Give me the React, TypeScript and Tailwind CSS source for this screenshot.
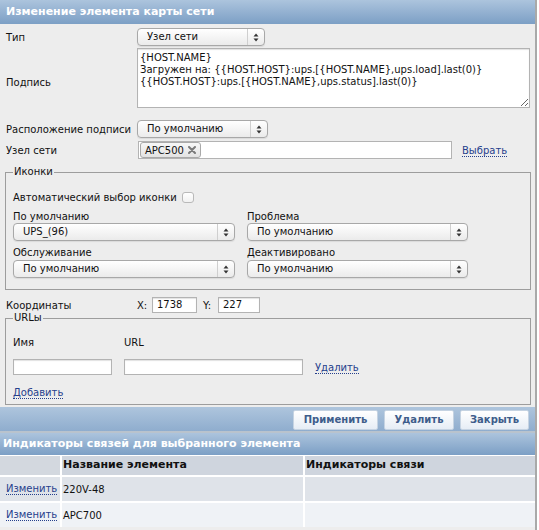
import React from 'react';

// Mac-style select stand-in
const Select = ({ value, className }: { value: string; className: string }) => (
    <div className={`flex items-center h-[18px] rounded-[4px] border border-[#a8a8a8] bg-gradient-to-b from-white to-[#ebebeb] shadow-[0_1px_1px_rgba(0,0,0,0.08)] ${className}`}>
        <span className="flex-1 pl-[9px] text-[10px] leading-none text-[#111]">{value}</span>
        <span className="w-[17px] h-full border-l border-[#cfcfcf] flex items-center justify-center">
            <svg width="6" height="9" viewBox="0 0 6 9">
                <path d="M3 0.5 L5.5 3.5 L0.5 3.5 Z" fill="#333" />
                <path d="M3 8.5 L5.5 5.5 L0.5 5.5 Z" fill="#333" />
            </svg>
        </span>
    </div>
);

const Link = ({ children }: { children: React.ReactNode }) => (
    <span className="text-[10px] leading-[11px] text-[#26408c] border-b border-dotted border-[#26408c] cursor-pointer">{children}</span>
);

const TextInput = ({ value, className }: { value?: string; className: string }) => (
    <div className={`h-[16px] bg-white border border-[#b3b3b3] shadow-[inset_0_1px_1px_rgba(0,0,0,0.12)] pl-[4px] text-[10px] leading-[14px] text-[#111] ${className}`}>
        {value}
    </div>
);

const Header = ({ title, pad }: { title: string; pad: string }) => (
    <div className={`bg-gradient-to-b from-[#acc4dd] to-[#7c9fc5] text-white font-bold text-[11px] flex items-center ${pad}`}>
        {title}
    </div>
);

const App: React.FC = () => {
    const links = [
        { name: '220V-48', bg: 'bg-[#dfe3e9]' },
        { name: 'APC700', bg: 'bg-[#eff2f6]' },
    ];

    return (
        <div className="w-[539px] h-[530px] overflow-hidden bg-white font-['DejaVu_Sans',sans-serif] text-[#111]">
            <div className="w-[537px] h-full bg-[#ededed] border-r-2 border-[#a9a9a9]">
                <Header title="Изменение элемента карты сети" pad="h-[24px] pl-[6px]" />

                {/* Form */}
                <div className="pl-[6px] text-[10px]">
                    <div className="flex items-center mt-[4px]">
                        <span className="w-[131px]">Тип</span>
                        <Select value="Узел сети" className="w-[128px]" />
                    </div>

                    <div className="flex items-center mt-[2px]">
                        <span className="w-[131px] pt-[8px]">Подпись</span>
                        <textarea
                            className="w-[393px] h-[60px] bg-white border border-[#b3b3b3] shadow-[inset_0_1px_1px_rgba(0,0,0,0.12)] px-[2px] pt-[3px] text-[10px] leading-[12px] font-['DejaVu_Sans',sans-serif] text-[#111] outline-none"
                            defaultValue={'{HOST.NAME}\nЗагружен на: {{HOST.HOST}:ups.[{HOST.NAME},ups.load].last(0)}\n{{HOST.HOST}:ups.[{HOST.NAME},ups.status].last(0)}'}
                        />
                    </div>

                    <div className="flex items-center mt-[12px]">
                        <span className="w-[131px]">Расположение подписи</span>
                        <Select value="По умолчанию" className="w-[131px]" />
                    </div>

                    <div className="flex items-center mt-[3px]">
                        <span className="w-[132px]">Узел сети</span>
                        <div className="w-[314px] h-[18px] bg-white border border-[#b3b3b3] flex items-center pl-[1px]">
                            <span className="h-[16px] flex items-center gap-[4px] px-[4px] rounded-[3px] border border-[#a9a9a9] bg-gradient-to-b from-[#f7f7f7] to-[#e3e3e3] text-[10px]">
                                APC500
                                <svg width="8" height="8" viewBox="0 0 8 8">
                                    <path d="M1 1 L7 7 M7 1 L1 7" stroke="#7a7a7a" strokeWidth="2" strokeLinecap="round" />
                                </svg>
                            </span>
                        </div>
                        <span className="ml-[10px]"><Link>Выбрать</Link></span>
                    </div>
                </div>

                {/* Icons fieldset */}
                <fieldset className="ml-[5px] mt-[7px] w-[526px] border border-[#9d9d9d] px-[7px] pb-[11px] text-[10px]">
                    <legend className="px-[1px] leading-[12px]">Иконки</legend>
                    <div className="flex items-center mt-[13px] h-[12px]">
                        <span>Автоматический выбор иконки</span>
                        <span className="ml-[5px] w-[12px] h-[11px] rounded-[3px] border border-[#b9b9b9] bg-gradient-to-b from-white to-[#f1f1f1]"></span>
                    </div>
                    <div className="grid grid-cols-[222px_221px] gap-x-[12px] mt-[8px]">
                        <div>
                            <div className="leading-[12px]">По умолчанию</div>
                            <Select value="UPS_(96)" className="w-[222px]" />
                        </div>
                        <div>
                            <div className="leading-[12px]">Проблема</div>
                            <Select value="По умолчанию" className="w-[221px]" />
                        </div>
                        <div className="mt-[6px]">
                            <div className="leading-[12px] mb-[1px]">Обслуживание</div>
                            <Select value="По умолчанию" className="w-[222px]" />
                        </div>
                        <div className="mt-[6px]">
                            <div className="leading-[12px] mb-[1px]">Деактивировано</div>
                            <Select value="По умолчанию" className="w-[221px]" />
                        </div>
                    </div>
                </fieldset>

                {/* Coordinates */}
                <div className="flex items-center pl-[6px] mt-[7px] h-[16px] text-[10px]">
                    <span className="w-[131px]">Координаты</span>
                    <span className="w-[15px]">X:</span>
                    <TextInput value="1738" className="w-[45px]" />
                    <span className="ml-[6px] w-[15px]">Y:</span>
                    <TextInput value="227" className="w-[42px]" />
                </div>

                {/* URLs fieldset */}
                <fieldset className="ml-[5px] -mt-[1px] w-[526px] border border-[#9d9d9d] px-[7px] pb-[7px] text-[10px]">
                    <legend className="px-[1px] leading-[12px]">URLы</legend>
                    <div className="flex mt-[13px] leading-[12px]">
                        <span className="w-[111px]">Имя</span>
                        <span>URL</span>
                    </div>
                    <div className="flex items-center mt-[10px]">
                        <TextInput className="w-[99px]" />
                        <TextInput className="w-[179px] ml-[12px]" />
                        <span className="ml-[12px]"><Link>Удалить</Link></span>
                    </div>
                    <div className="mt-[10px] h-[12px]">
                        <Link>Добавить</Link>
                    </div>
                </fieldset>

                {/* Button bar */}
                <div className="mt-[2px] h-[26px] bg-gradient-to-b from-[#aec5dd] to-[#8fadce] flex items-center justify-end gap-[6px] pr-[6px] pt-[1px] border-b-2 border-[#b9c3cd]">
                    {['Применить', 'Удалить', 'Закрыть'].map((b, i) => (
                        <button
                            key={b}
                            className={`h-[20px] rounded-[2px] border border-[#c5d3e2] bg-gradient-to-b from-white to-[#e6edf5] text-[10px] font-bold text-[#3e5d8b] font-['DejaVu_Sans',sans-serif] ${i === 0 ? 'w-[85px]' : i === 1 ? 'w-[70px]' : 'w-[69px]'}`}
                        >
                            {b}
                        </button>
                    ))}
                </div>

                <Header title="Индикаторы связей для выбранного элемента" pad="h-[22px] pl-[3px]" />

                {/* Links table */}
                <div className="grid grid-cols-[60px_241px_1fr] gap-[2px] bg-white pt-[1px] text-[10px]">
                    <div className="h-[19px] bg-[#d3d8df]"></div>
                    <div className="h-[19px] bg-[#cfd5de] font-bold text-[11px] flex items-center pl-[1px]">Название элемента</div>
                    <div className="h-[19px] bg-[#cfd5de] font-bold text-[11px] flex items-center pl-[1px]">Индикаторы связи</div>
                    {links.map((l) => (
                        <React.Fragment key={l.name}>
                            <div className={`h-[24px] ${l.bg} flex items-center pl-[6px]`}><Link>Изменить</Link></div>
                            <div className={`h-[24px] ${l.bg} flex items-center pl-[1px]`}>{l.name}</div>
                            <div className={`h-[24px] ${l.bg}`}></div>
                        </React.Fragment>
                    ))}
                </div>
            </div>
        </div>
    );
};

export default App;
